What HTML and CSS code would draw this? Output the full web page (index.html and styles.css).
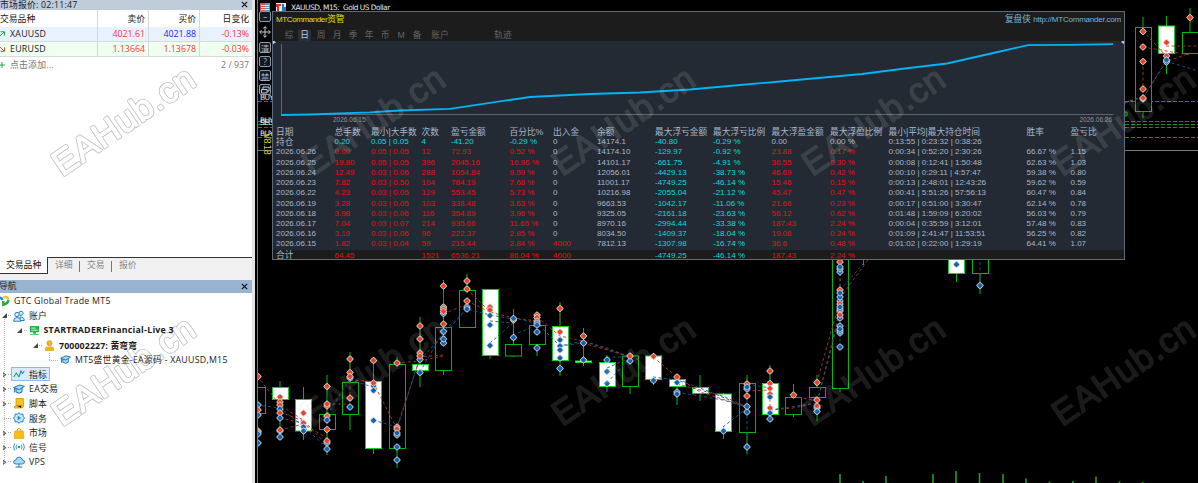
FILE: index.html
```html
<!DOCTYPE html>
<html lang="zh-CN">
<head>
  <meta charset="UTF-8" />
  <meta name="viewport" content="width=device-width, initial-scale=1" />
  <title>MTCommander</title>
  <link rel="stylesheet" href="styles.css">
</head>
<body>
  <!-- icons shared by the navigator tree -->
  <svg class="defs" width="0" height="0">
    <symbol id="i-users" viewBox="0 0 12 12"><g fill="#d9edf9" stroke="#2583bd" stroke-width="1"><circle cx="8" cy="3.3" r="2.1"/><path d="M7 7q4.300 0 4.300 3.500H7z"/><circle cx="4" cy="4.500" r="2.200"/><path d="M.6 11.200Q.6 7.500 4 7.500t3.800 3.700z"/></g></symbol>
    <symbol id="i-server" viewBox="0 0 12 12"><path fill="#25b34b" d="M1 1h10v7H1zM4.500 8h3v1.500h-3zM1 10h10v1H1z"/><path stroke="#fff" stroke-width=".8" d="M2.500 3.400h5M2.500 5.700h7"/></symbol>
    <symbol id="i-user" viewBox="0 0 12 12"><g fill="#f5b50f" stroke="#d98e00" stroke-width=".6"><circle cx="6" cy="3.500" r="2.800"/><path d="M1.500 11.500V10q0-2.500 2.500-2.500h4q2.500 0 2.500 2.500v1.500z"/></g></symbol>
    <symbol id="i-cap" viewBox="0 0 12 12"><g fill="#a9d9f3" stroke="#1c75ad" stroke-width="1"><path d="M3 5v4q3 2.500 6 0V5"/><path d="M.6 4.600 6.500 2l5 1.400-5.200 3.200zM1.600 5v4.500"/></g></symbol>
    <symbol id="i-ind" viewBox="0 0 12 12"><path fill="none" stroke="#2bab55" stroke-width="1.100" d="m.8 9 2.500-4 2.600 4"/><path fill="none" stroke="#2d7fc1" stroke-width="1.100" d="m5.900 9 2-6 1.500 2.600L11.300 3"/></symbol>
    <symbol id="i-script" viewBox="0 0 12 12"><path fill="#fcc419" stroke="#d89500" stroke-width=".8" d="M3 1.500h7.500V9q0 2-2 2h-7Q.8 8.800 3 8.500z"/><path stroke="#d89500" stroke-width=".8" d="M3 8.500h5.500V11"/></symbol>
    <symbol id="i-gear" viewBox="0 0 12 12"><path fill="#c5e7fa" stroke="#2583bd" d="m6 .6 1.500 1.700 2.300-.3.400 2.300L11.500 6l-1.300 1.700-.4 2.300-2.300-.3L6 11.400 4.500 9.700 2.200 10l-.4-2.300L.5 6l1.300-1.700L2.200 2l2.300.3z"/><path fill="#2583bd" d="M4.700 3.800 8 6 4.700 8.200z"/></symbol>
    <symbol id="i-bag" viewBox="0 0 12 12"><path fill="none" stroke="#d99300" d="M4 5V2.800q2-3 4 0V5"/><path fill="#fbbd12" stroke="#e09b00" stroke-width=".6" d="M1.800 4h8.400l.8 7.400H1z"/></symbol>
    <symbol id="i-signal" viewBox="0 0 12 12"><circle cx="6" cy="6" r="1.200" fill="#2583bd"/><path fill="none" stroke="#2583bd" stroke-width=".9" d="M3.700 3.700q-1.500 2.300 0 4.600M8.300 3.700q1.500 2.300 0 4.600M1.700 2.500q-2.200 3.500 0 7M10.300 2.500q2.200 3.500 0 7"/></symbol>
    <symbol id="i-cloud" viewBox="0 0 12 12"><path fill="#a9d9f3" stroke="#1c75ad" stroke-width=".9" d="M3 8Q.5 8 .6 6t2.200-2Q3.500 1 6.300 1.200T9.500 4Q11.500 4 11.500 6T9.300 8z"/><path stroke="#1c75ad" d="M6 8v3M2.500 11h7"/></symbol>
  </svg>

  <div class="app">
    <aside class="side">
      <section class="market">
        <div class="bar bar-market"><span>市场报价: 02:11:47</span><svg class="close" viewBox="0 0 8 8"><path d="m1 1 6 6M7 1 1 7"/></svg></div>
        <div class="quote quote-head"><span>交易品种</span><span>卖价</span><span>买价</span><span>日变化</span></div>
        <div class="quote quote-up"><span class="sym"><svg viewBox="0 0 6 8"><path d="m0 6 4-4M.5 1.700h4v4"/></svg>XAUUSD</span><span class="red">4021.61</span><span class="blue">4021.88</span><span class="red">-0.13%</span></div>
        <div class="quote quote-down"><span class="sym"><svg viewBox="0 0 6 8"><path d="m0 2 4 4M.5 6.300h4v-4"/></svg>EURUSD</span><span class="red">1.13664</span><span class="red">1.13678</span><span class="red">-0.03%</span></div>
        <div class="quote-add"><span class="sym"><svg viewBox="0 0 6 8"><path d="M0 4h5M2 1v6"/></svg>点击添加...</span><span>2 / 937</span></div>
      </section>
      <div class="tabs"><span class="active">交易品种</span><span>详细</span><span>交易</span><span>报价</span></div>
      <section class="nav">
        <div class="bar bar-nav"><span>导航</span><svg class="close" viewBox="0 0 8 8"><path d="m1 1 6 6M7 1 1 7"/></svg></div>
        <div class="tree">
          <div class="node root"><svg class="ico" viewBox="0 0 12 12"><path fill="none" stroke="#1687d9" stroke-width="3" d="M0 2q2 0 3 3"/><path fill="none" stroke="#f6c21c" stroke-width="3" d="M4 2q4-2 6.500 1.500"/><path fill="none" stroke="#29a745" stroke-width="3" d="M10 4.500Q10 9 4 10.500V6"/></svg>GTC Global Trade MT5</div>
          <div class="node l1"><i class="open"></i><svg class="ico"><use href="#i-users"/></svg>账户</div>
          <div class="node l2"><i class="open"></i><svg class="ico"><use href="#i-server"/></svg><b>STARTRADERFinancial-Live 3</b></div>
          <div class="node l3"><i class="open"></i><svg class="ico"><use href="#i-user"/></svg><b class="login">700002227: 黄弯弯</b></div>
          <div class="node l4"><i class="elbow"></i><svg class="ico"><use href="#i-cap"/></svg>MT5盛世黄金-EA源码 - XAUUSD,M15</div>
          <div class="node l1"><i class="shut"></i><span class="picked"><svg class="ico"><use href="#i-ind"/></svg>指标</span></div>
          <div class="node l1"><i class="shut"></i><svg class="ico"><use href="#i-cap"/></svg>EA交易</div>
          <div class="node l1"><i class="shut"></i><svg class="ico"><use href="#i-script"/></svg>脚本</div>
          <div class="node l1"><i class="leaf"></i><svg class="ico"><use href="#i-gear"/></svg>服务</div>
          <div class="node l1"><i class="shut"></i><svg class="ico"><use href="#i-bag"/></svg>市场</div>
          <div class="node l1"><i class="shut"></i><svg class="ico"><use href="#i-signal"/></svg>信号</div>
          <div class="node l1"><i class="shut"></i><svg class="ico"><use href="#i-cloud"/></svg>VPS</div>
        </div>
      </section>
    </aside>
    <div class="splitter"></div>

    <main class="chart">
      <svg class="candles" id="candles" viewBox="258 0 940 483" width="940" height="483"></svg>
      <div class="chart-title">
        <svg width="27" height="9" viewBox="0 0 27 9"><path fill="#d9534f" d="M0 0h5v9H0z"/><path fill="#4b9bd4" d="M5 0h5v9H5z"/><path stroke="#fff" stroke-width=".8" d="M1 2.500h8M1 4.500h8M1 6.500h8"/><path fill="#e8eef4" d="M16 0h10v9H16z"/><path fill="#d9362f" d="M16 1h5v2h-2v5h-2V4h-1z"/><path fill="#2877b8" d="M22 1h2v3h2v4h-4z"/></svg>
        <span>XAUUSD, M15:&nbsp; Gold US Dollar</span>
      </div>
      <div class="tools">
        <span class="tool">–</span>
        <svg class="move" viewBox="0 0 12 12"><path d="M6 .8v10.400M.8 6h10.400M4.200 2.500 6 .7l1.800 1.800M4.200 9.500 6 11.300l1.800-1.800M2.500 4.200.7 6l1.800 1.800M9.500 4.200 11.300 6 9.500 7.800"/></svg>
        <span class="tool">清</span>
        <span class="tool">?</span>
        <span class="tool">禁</span>
        <span class="tool"><svg viewBox="0 0 10 10"><path d="M3 4V2h6v4H7M1.500 4.500h5.500v3.500H1.500z"/></svg></span>
      </div>
      <section class="panel">
        <header class="panel-head">
          <div class="brand"><span class="brand-name"><em>MTCommander</em>资管</span><span class="brand-link">复盘侠 <em>http://MTCommander.com</em></span></div>
          <div class="periods"><span>综</span><span class="on">日</span><span>周</span><span>月</span><span>季</span><span>年</span><span>币</span><span>M</span><span>备</span><span class="wide">账户</span><span class="track">轨迹</span></div>
        </header>
        <div class="equity">
          <svg width="851" height="86" viewBox="273 41 851 86">
            <path class="axis" d="M281.500 44v70.500H1113.500"/>
            <path class="curve" d="M281 115 310 114.500 370 112.300 400 110.500 450 108.800 530 97 590 94 640 92.500 690 89.500 740 85 780 81.500 862 74 905 68.500 947 63.500 1000 51.500 1028 45.200 1070 44.800 1113 44.100"/>
            <path fill="#c7d0da" d="m273 40 3 2.500-3 1.500zM1124 40l-3 2 3 2z"/>
            <text x="333" y="122.300">2026.06.15</text>
            <text x="1079.500" y="122.300">2026.06.26</text>
          </svg>
        </div>
        <div class="report" id="report"></div>
      </section>
    </main>
  </div>
  <svg class="watermark" id="watermark" width="1198" height="483" viewBox="0 0 1198 483">
    <defs>
      <text id="wm" x="0" y="-1.300" font-size="35" textLength="164">EAHub.cn</text>
      <mask id="hollow" maskUnits="userSpaceOnUse" x="-20" y="-50" width="220" height="80">
        <path fill="#fff" d="M-20-50h220v80H-20z"/>
        <use href="#wm" fill="#000" stroke="#000" stroke-width="1.200"/>
      </mask>
      <g id="stamp">
        <use href="#wm" class="wm-fill"/>
        <g mask="url(#hollow)"><use href="#wm" class="wm-line"/></g>
      </g>
    </defs>
  </svg>
  <script src="script.js"></script>
</body>
</html>
```
FILE: styles.css
```css
* {
  box-sizing: border-box;
}
body {
  margin: 0;
  overflow: hidden;
  background: #000;
  font-family: "Open Sans", "Noto Sans CJK SC", sans-serif;
  font-size: 8.8px;
  color: #1a1a1a;
}
em, i {
  font-style: normal;
}
svg {
  flex: none;
}
.defs {
  position: absolute;
}
.app {
  display: flex;
  width: 1198px;
  height: 483px;
}

/* left side */
.side {
  width: 252px;
  display: flex;
  flex-direction: column;
  background: #fff;
  white-space: nowrap;
}
.bar {
  display: flex;
  justify-content: space-between;
  align-items: center;
  padding-right: 4px;
}
.bar-market {
  height: 10px;
  line-height: 10px;
  padding-bottom: 1px;
  letter-spacing: 0.2px;
  background: #bfcddb;
}
.bar-nav {
  height: 13px;
  line-height: 13px;
  background: #99b4d1;
}
.bar-nav span {
  margin-left: -1px;
}
.close {
  width: 7px;
  height: 7px;
  stroke: #111;
  stroke-width: 1.4;
}
.market {
  height: 257px;
}
.quote {
  display: grid;
  grid-template-columns: 98px 51px 51px 52px;
  height: 15px;
  line-height: 14px;
  border-bottom: 1px solid #d5dadd;
}
.quote span {
  text-align: right;
  padding-right: 3px;
  border-right: 1px solid #d5d9dc;
}
.quote span:first-child {
  text-align: left;
}
.quote span:last-child {
  border: 0;
}
.quote-head {
  height: 17px;
  line-height: 18px;
  border: 0;
}
.quote-up {
  background: #e8f2fe;
}
.quote-down {
  background: #effff0;
}
.sym {
  display: flex;
  align-items: center;
  letter-spacing: 0.25px;
}
.sym svg {
  width: 6px;
  height: 8px;
  margin-right: 4px;
  fill: none;
  stroke: #23a84b;
}
.quote-down .sym svg {
  stroke: #d8503f;
}
.red {
  color: #f33;
}
.blue {
  color: #22f;
}
.quote-add {
  display: flex;
  justify-content: space-between;
  padding-right: 3px;
  line-height: 16px;
  color: #777;
}
.tabs {
  display: flex;
  flex: none;
  height: 23px;
  padding-bottom: 7px;
  line-height: 15px;
  background: #f0f0f0;
  border-top: 1px solid #333;
  color: #888;
}
.tabs span {
  width: 32px;
  padding-left: 7px;
  background: linear-gradient(#777, #777) right 3px / 1px 11px no-repeat;
}
.tabs .active {
  width: 48px;
  height: 17px;
  padding-left: 6px;
  margin-top: -1px;
  line-height: 17px;
  background: #fff;
  border-right: 1px solid #333;
  border-bottom: 1px solid #333;
  color: #111;
}
.tabs span:last-child {
  background: none;
}
.nav {
  flex: 1;
}
.tree {
  padding-top: 1px;
  letter-spacing: 0.26px;
  background: repeating-linear-gradient(#bbb 0 1px, transparent 1px 2px) 4px 24px / 1px 144px no-repeat;
}
.node {
  display: flex;
  align-items: center;
  height: 14.6px;
}
.ico {
  width: 12px;
  height: 12px;
  margin-right: 4px;
}
.root .ico {
  width: 10px;
}
.l2 { padding-left: 15.5px; }
.l3 { padding-left: 31px; }
.l4 { padding-left: 47px; }
.l2 .ico,
.l3 .ico,
.l4 .ico {
  width: 11px;
  height: 11px;
}
.login {
  letter-spacing: 0.12px;
}
.node i {
  position: relative;
  width: 13px;
  height: 9px;
  background: repeating-linear-gradient(90deg, #aaa 0 1px, transparent 1px 2px) 8px 4px / 4px 1px no-repeat;
}
.node i::before {
  content: "";
  position: absolute;
  left: 1.5px;
  top: 2px;
}
.node .open::before {
  border-left: 5px solid transparent;
  border-bottom: 5px solid #444;
}
.node .shut::before {
  left: 2.5px;
  width: 4px;
  height: 6px;
  background: #555;
  clip-path: polygon(0 0, 100% 50%, 0 100%, 0 0, 1px 1.8px, 1px 4.2px, 2.4px 3px, 1px 1.8px);
}
.node .leaf {
  background-position: 4px 4px;
  background-size: 8px 1px;
}
.node .elbow {
  height: 14px;
  background: repeating-linear-gradient(90deg, #aaa 0 1px, transparent 1px 2px) 2px 7px / 9px 1px no-repeat,
    repeating-linear-gradient(#aaa 0 1px, transparent 1px 2px) 2px 0 / 1px 8px no-repeat;
}
.picked {
  display: flex;
  align-items: center;
  height: 14px;
  margin-left: -2px;
  padding: 0 2px 0 1px;
  background: #dbe9fb;
  border: 1px solid #90b8e8;
}
.splitter {
  width: 6px;
  background: linear-gradient(90deg, #e4e4e4 0 3px, #000 3px 5px, #777 5px);
}

/* chart window */
.chart {
  position: relative;
  flex: 1;
  overflow: hidden;
  background: #000;
}
.candles {
  position: absolute;
  left: 0;
  top: 0;
}
.chart-title {
  position: relative;
  display: flex;
  gap: 4px;
  padding: 2.5px 0 0 2px;
  height: 12px;
  line-height: 9px;
  font-family: "DejaVu Sans", sans-serif;
  font-size: 7.4px;
  letter-spacing: -0.5px;
  color: #e8e8e8;
}
.tools {
  position: absolute;
  left: 1px;
  top: 11px;
  width: 13px;
  display: flex;
  flex-direction: column;
  gap: 3px;
}
.tool {
  display: flex;
  justify-content: center;
  align-items: center;
  width: 12px;
  height: 11px;
  border: 1px solid #8d9cb0;
  border-radius: 2px;
  background: #141a22;
  color: #aebccd;
  font-size: 8.5px;
}
.tool svg,
.move {
  width: 10px;
  height: 10px;
  fill: none;
  stroke: #c0cad5;
}
.move {
  width: 12px;
  height: 12px;
  margin: 1px 0;
}
.panel {
  position: absolute;
  left: 14px;
  top: 11px;
  width: 853px;
  height: 249px;
  border: 1px solid #5f6b7b;
  background: #242a33;
  font-family: "Liberation Sans", "Noto Sans CJK SC", sans-serif;
  font-size: 8px;
  color: #a7b6cb;
  white-space: nowrap;
}
.panel-head {
  height: 29px;
  background: #1c1c1c;
}
.brand {
  display: flex;
  justify-content: space-between;
  height: 15px;
  line-height: 15px;
  padding: 0 3px;
  font-size: 8.7px;
}
.brand-name {
  color: #e0e000;
}
.brand-name em {
  font-size: 8px;
  letter-spacing: -0.4px;
}
.brand-link {
  color: #74b4dc;
}
.brand-link em {
  font-size: 8px;
  letter-spacing: -0.22px;
}
.periods {
  display: flex;
  padding-left: 8px;
  line-height: 11px;
  padding-top: 3px;
  font-size: 8.7px;
  color: #666;
}
.periods span {
  width: 16px;
  height: 11px;
  text-align: center;
}
.periods .on {
  width: 13px;
  margin: 0 2px 0 1px;
  background: #26303c;
  color: #b9cbe0;
}
.periods .wide {
  width: 30px;
}
.periods .track {
  margin-left: 30px;
  width: 36px;
}
.equity {
  height: 86px;
}
.equity svg {
  display: block;
}
.axis {
  fill: none;
  stroke: #62666b;
}
.curve {
  fill: none;
  stroke: #00b4f5;
  stroke-width: 1.8;
}
.equity text {
  font-size: 6.5px;
  fill: #8b929b;
}
.row {
  display: grid;
  grid-template-columns: 58.5px 36.5px 50.5px 29.5px 58.5px 43.5px 44px 58px 58px 58.5px 58.5px 58.5px 138px 44px 50px;
  height: 10.22px;
  line-height: 10.22px;
  padding-left: 3px;
}
.row-head {
  font-size: 8.7px;
}
.row span:first-child:not(.date) {
  font-size: 8.7px;
}
.row-sum {
  height: 9px;
  line-height: 11px;
  margin-top: .5px;
  background: #1c1c1c;
}
.up {
  color: #ea0c14;
}
.down {
  color: #00dede;
}

/* candles */
.wick,
.body {
  stroke: #00b80c;
}
.body {
  fill: #000;
}
.body.bear {
  fill: #fff;
  stroke: #0bd51a;
}
.volume {
  stroke: #2aa52a;
  stroke-width: 1.5;
}
.level {
  stroke: #159022;
  stroke-dasharray: 4 2;
}
.trade {
  fill: none;
  stroke-width: .9;
  stroke-dasharray: 3 2.5;
}
.trade.sell { stroke: #a23b20; }
.trade.buy { stroke: #155994; }
.halo {
  fill: #d0d7de;
}
.deal.sell { fill: #e9441f; }
.deal.buy { fill: #1462ad; }
.tag {
  font: 7.5px "DejaVu Sans", sans-serif;
  letter-spacing: -0.7px;
  fill: #e5e5e5;
}
.ver {
  font: 8.5px "DejaVu Sans", sans-serif;
  fill: #d9d900;
}

.watermark {
  position: absolute;
  left: 0;
  top: 0;
  pointer-events: none;
  font-family: "Liberation Sans", sans-serif;
}
.wm-fill {
  fill: #fff;
  stroke: #fff;
  stroke-width: 1.6;
  stroke-linejoin: round;
  opacity: .105;
}
.wm-line {
  fill: none;
  stroke: #000;
  stroke-width: 2.8;
  stroke-linejoin: round;
  opacity: var(--edge, .26);
}
.on-chart {
  --edge: .05;
}
```
FILE: script.js
```js
// x, body top, body bottom, high, low, filled
const candles = [
  [257, 387.5, 413.5, 376, 440, 0],
  [280, 387.5, 399.5, 381, 437, 1],
  [303.5, 399.5, 431, 387, 440, 1],
  [327, 414.5, 429.5, 375, 455, 0],
  [350, 382.5, 414.5, 352, 430, 0],
  [373.5, 381.5, 448.5, 357, 454, 1],
  [397, 364.5, 448.5, 357, 468, 0],
  [420, 364.5, 370.5, 317, 387, 1],
  [443.5, 327.5, 370.5, 280, 375, 0],
  [467, 290.5, 327.5, 274, 327, 0],
  [490, 289.5, 355.5, 289, 359, 1],
  [513.5, 344.5, 356, 309, 357, 0],
  [537, 325.5, 344.5, 315, 356, 0],
  [560, 326.5, 360.5, 302, 376, 1],
  [583.5, 361, 362.5, 328, 366, 1],
  [607, 362.5, 386.5, 355, 392, 1],
  [630, 356, 386.5, 355, 394, 0],
  [653.5, 356, 379.5, 355, 385, 1],
  [677, 379.5, 386.5, 375, 405, 1],
  [700, 387.5, 393.5, 375, 401, 1],
  [723.5, 394, 431.5, 393, 439, 1],
  [747, 383.5, 432.5, 375, 454, 0],
  [770, 383.5, 414.5, 365, 420, 1],
  [793.5, 397.5, 414.5, 384, 417, 0],
  [817, 387.5, 397.5, 375, 421, 0],
  [840, 200, 388.5, 200, 392, 0],
  [863.5, 200, 250, 200, 265, 0],
  [956.5, 230, 273.5, 230, 282, 1],
  [980, 230, 273.5, 230, 294, 0],
  [1143, 27.5, 111.5, 17, 118, 0],
  [1166.5, 26, 53.5, 16, 74, 1],
  [1190, 32.5, 53.5, 8, 53, 0]
];

// deals per candle: s = sell arrow, b = buy arrow
const deals = {
  258: "s376.5 b405 s410 b415 b431 s432 b434 b443",
  280: "s397 s402 s405 b409 s413 b418 b431 s430 b437",
  303.5: "s413 s423 b427 b431",
  327: "s386.5 s406 s404 s416 b420 s429.5 b443 s441 b449",
  350: "s359 s372.5 b378 s376.5 s398 b407",
  373.5: "s360.5 b386 s383 b390.5 b420.5",
  397: "s363 s427 s429 b435 b433 b447 b460",
  420: "s326 s339 s353 b359.5 s356 b372.5",
  443.5: "s286 s307 b313.5 s309 s311.5 s324 b331.5 b343 b339",
  467: "s281 s289 s301 b307 b309",
  490: "s307 s310 b315.5 b325 b345.5",
  513.5: "s320 b318.5 b337.5",
  537: "s315 s317.5 s321 b323 b325 b332 b348",
  560: "s308.5 s332 b340 b346 b350 b358 b368.5",
  583.5: "b343 s336 b360",
  607: "b360 b371.5 b383.5",
  630: "b361 s356",
  653.5: "s356.5 b380.5",
  677: "s377 b382.5 b392 b394",
  723.5: "b431",
  747: "s384 b389 b387 s396 b412 b406.5 b447",
  770: "s371 s383.5 s388.5 s394 b397 s408 b413 b419",
  793.5: "s395",
  817: "s382.5 s400 b408 s406 b411.5",
  840: "s262 b272 b269 b267 s290 b301 b297 b293 s304 b311 b309 b307 b318 s315 b326 b333 b331 b329 b347",
  956.5: "b264.5",
  980: "b285.5",
  1143: "s31.5 s47 s61.5 s89 b99 s98",
  1166.5: "s42.5 s56 b62 b60",
  1190: "s17.5"
};

const sellTrades = [
  "M257 376 280 405 303 420 327 445", "M280 412 303 421", "M280 430 303 424 327 438",
  "M280 418 303 423", "M327 404 350 404", "M350 359V398", "M350 380 373 381.5",
  "M373.5 360V383L397 429 420 357 443 355", "M327 416V441", "M420 326V353",
  "M397 363 420 361 443 356", "M443.5 286V324M443.5 314 467 304",
  "M467 289 490 312 513 318 537 321", "M467 301 490 312", "M537 317 560 336 583 341 630 357",
  "M560 308V332", "M583 343 607 350 640 360", "M653 357 677 377 700 392 747 407",
  "M677 384 723 396 747 407", "M747 384V396M747 391 770 390", "M770 371V408",
  "M770 410 793 408 817 403 840 310", "M817 382 840 300", "M793 396 817 401",
  "M840 262V315M840 298 868 260", "M1143 31 1166 56M1143 47 1190 55M1166 46H1198M1143 61V98L1166 62 1190 53M1125 103 1143 97"
];
const buyTrades = [
  "M257 405 280 408 303 426 327 448", "M327 415 350 379", "M373 420 397 427 420 358",
  "M350 380 373 387", "M420 360 467 309 490 315 513 319", "M420 372 443 332 467 309",
  "M490 321 513 323M490 343 513 323M513 335 537 325", "M513 318 537 323 560 346 583 341 607 348 630 357",
  "M560 346 583 343M607 368 630 358M607 383 630 358M607 357H630", "M653 377 677 380 700 388 747 407",
  "M677 392 723 400 747 407M723 427 747 408M747 388V447", "M747 384 770 388M770 410 817 403 840 315",
  "M840 267V347M840 290 863 264M980 262V285", "M1143 98 1166 61 1198 71M1125 103 1143 96"
];
const volumes = [[840, 474], [863, 481], [886, 476], [933, 474], [956, 471], [979.5, 473], [1003, 474], [1026, 478.5], [1049.5, 481.5], [1073, 481], [1096, 476.5], [1119.5, 481.5], [1142.5, 482]];

let out = "";
[101.5, 121.5, 124.5, 127.5, 137.5].forEach(y => {
  out += `<path class="level" d="M258 ${y}H272M1125 ${y}H1198"/>`;
});
out += `<path stroke="#6f7a86" d="M258 150.5H272M1125 150.5H1198"/><path class="body" d="M1125 112h2v4h-2z"/>`;
for (const [x, top, bottom, high, low, filled] of candles) {
  out += `<path class="wick" d="M${x} ${high}V${low}"/>`;
  out += `<rect class="body${filled ? " bear" : ""}" x="${Math.floor(x) - 7.5}" y="${top}" width="16" height="${bottom - top}"/>`;
}
sellTrades.forEach(d => { out += `<path class="trade sell" d="${d}"/>`; });
buyTrades.forEach(d => { out += `<path class="trade buy" d="${d}"/>`; });
for (const x in deals) {
  deals[x].split(" ").forEach(item => {
    const y = item.slice(1);
    const kind = item[0] === "s" ? "sell" : "buy";
    out += `<g transform="translate(${x} ${y})"><path class="halo" d="M0-3.8 2.1-2.1 3.800 0 2.100 2.100 0 3.800-2.100 2.100-3.800 0-2.100-2.100z"/><path class="deal ${kind}" d="M0-2.800 1.500-1.500 2.800 0 1.500 1.500 0 2.800-1.500 1.500-2.800 0-1.500-1.500z"/></g>`;
  });
}
volumes.forEach(([x, y]) => { out += `<path class="volume" d="M${x} ${y}V483"/>`; });
out += `<text class="tag" x="260" y="100">BUY</text><text class="tag" x="260" y="123">BUY</text><text class="tag" x="260" y="125">SEL</text><text class="tag" x="260" y="136">BUY</text>`;
out += `<text class="ver" transform="translate(263.5 133) rotate(90)" textLength="22">V8.18</text>`;
document.getElementById("candles").innerHTML = out;

const head = ["日期", "总手数", "最小|大手数", "次数", "盈亏金额", "百分比%", "出入金", "余额", "最大浮亏金额", "最大浮亏比例", "最大浮盈金额", "最大浮盈比例", "最小|平均|最大持仓时间", "胜率", "盈亏比"];
const rows = [
  ["持仓", "0.20", "0.05 | 0.05", "4", "-41.20", "-0.29 %", "0", "14174.1", "-40.80", "-0.29 %", "0.00", "0.00 %", "0:13:55 | 0:23:32 | 0:38:26", "", ""],
  ["2026.06.26", "0.60", "0.05 | 0.05", "12", "72.93", "0.52 %", "0", "14174.10", "-129.97", "-0.92 %", "23.88", "0.17 %", "0:00:34 | 0:52:20 | 2:30:26", "66.67 %", "1.15"],
  ["2026.06.25", "19.80", "0.05 | 0.05", "396", "2045.16", "16.96 %", "0", "14101.17", "-661.75", "-4.91 %", "36.55", "0.30 %", "0:00:08 | 0:12:41 | 1:50:48", "62.63 %", "1.03"],
  ["2026.06.24", "12.49", "0.03 | 0.06", "288", "1054.84", "9.59 %", "0", "12056.01", "-4429.13", "-38.73 %", "46.69", "0.42 %", "0:00:10 | 0:29:11 | 4:57:47", "59.38 %", "0.80"],
  ["2026.06.23", "7.82", "0.03 | 0.50", "104", "784.19", "7.68 %", "0", "11001.17", "-4749.25", "-46.14 %", "15.46", "0.15 %", "0:00:13 | 2:48:01 | 12:43:26", "59.62 %", "0.59"],
  ["2026.06.22", "4.23", "0.03 | 0.05", "129", "553.45", "5.73 %", "0", "10216.98", "-2055.04", "-21.12 %", "45.47", "0.47 %", "0:00:41 | 5:51:26 | 57:56:13", "60.47 %", "0.84"],
  ["2026.06.19", "3.28", "0.03 | 0.05", "103", "338.48", "3.63 %", "0", "9663.53", "-1042.17", "-11.06 %", "21.66", "0.23 %", "0:00:17 | 0:51:00 | 3:30:47", "62.14 %", "0.78"],
  ["2026.06.18", "3.98", "0.03 | 0.06", "116", "354.89", "3.96 %", "0", "9325.05", "-2161.18", "-23.63 %", "56.12", "0.62 %", "0:01:48 | 1:59:09 | 6:20:02", "56.03 %", "0.79"],
  ["2026.06.17", "7.04", "0.03 | 0.07", "214", "935.66", "11.65 %", "0", "8970.16", "-2994.44", "-33.38 %", "187.43", "2.24 %", "0:00:04 | 0:35:59 | 3:12:01", "57.48 %", "0.83"],
  ["2026.06.16", "3.19", "0.03 | 0.06", "96", "222.37", "2.85 %", "0", "8034.50", "-1409.37", "-18.04 %", "19.08", "0.24 %", "0:01:09 | 2:41:47 | 11:53:51", "56.25 %", "0.82"],
  ["2026.06.15", "1.82", "0.03 | 0.04", "59", "215.44", "2.84 %", "4000", "7812.13", "-1307.98", "-16.74 %", "36.6", "0.48 %", "0:01:02 | 0:22:00 | 1:29:19", "64.41 %", "1.07"],
  ["合计", "64.45", "", "1521", "6536.21", "86.04 %", "4000", "", "-4749.25", "-46.14 %", "187.43", "2.24 %", "", "", ""]
];

function tone(row, col, text) {
  if (col === 0) return row[0].startsWith("2026") ? "date" : "";
  if (col === 8 || col === 9) return "down";
  if (col < 6) return row[0] === "持仓" ? "down" : "up";
  if (col === 6) return text === "4000" ? "up" : "";
  if (col === 10 || col === 11) return row[0] === "持仓" ? "" : "up";
  return "";
}

let html = `<div class="row row-head">${head.map(t => `<span>${t}</span>`).join("")}</div>`;
rows.forEach(row => {
  const cls = row[0] === "合计" ? "row row-sum" : "row";
  html += `<div class="${cls}">${row.map((t, i) => `<span class="${tone(row, i, t)}">${t}</span>`).join("")}</div>`;
});
document.getElementById("report").innerHTML = html;

let stamps = "";
for (let x = 63; x < 1198; x += 250) {
  for (let y = 178; y < 483; y += 250) {
    stamps += `<use href="#stamp" class="${x > 250 ? "on-chart" : ""}" transform="translate(${x} ${y}) rotate(-34.3)"/>`;
  }
}
document.getElementById("watermark").insertAdjacentHTML("beforeend", stamps);
```
